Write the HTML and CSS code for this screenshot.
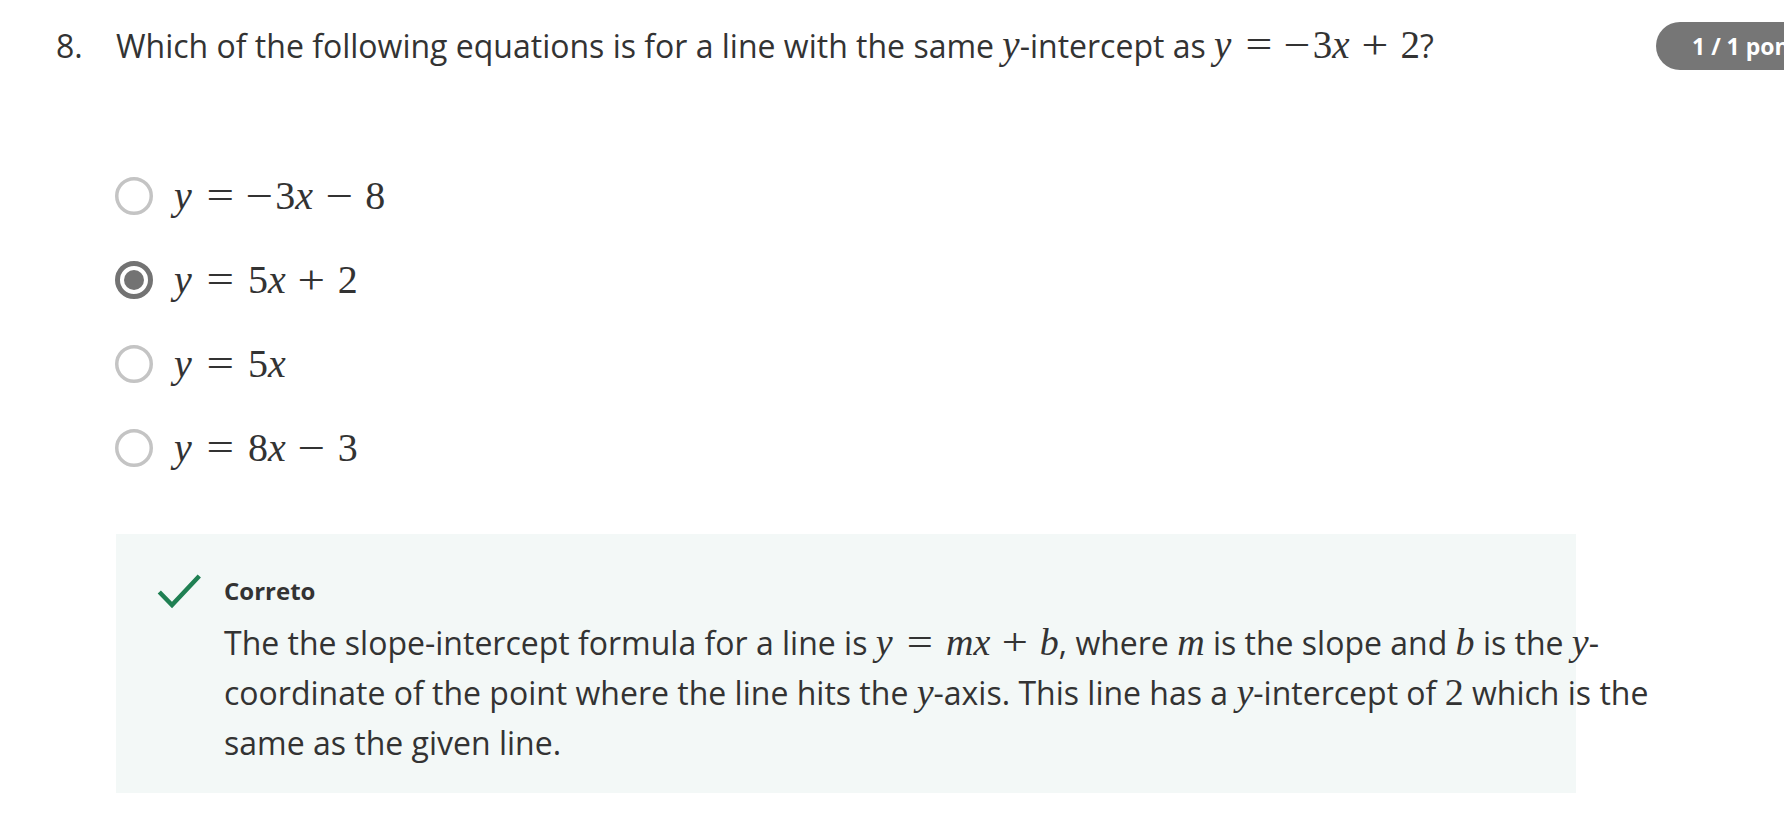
FILE: index.html
```html
<!DOCTYPE html>
<html lang="en">
<head>
<meta charset="utf-8">
<title>Question 8</title>
<link rel="stylesheet" href="styles.css">
</head>
<body>
<div class="page">
  <div class="qrow">
    <div class="qnum">8.</div>
    <div class="qtext">Which of the following equations is for a line with the same <span class="m"><span class="mi">y</span></span>-intercept as <span class="m"><span class="mi">y</span><span class="rel">=</span><span class="un">−</span>3<span class="mi">x</span><span class="bin">+</span>2</span>?</div>
    <div class="badge">1 / 1 ponto</div>
  </div>

  <ul class="options">
    <li class="opt">
      <svg class="radio" width="38" height="38" viewBox="0 0 38 38"><circle cx="19" cy="19" r="17.25" fill="none" stroke="#c4c4c4" stroke-width="3.5"/></svg>
      <span class="m opt-m"><span class="mi">y</span><span class="rel">=</span><span class="un">−</span>3<span class="mi">x</span><span class="bin">−</span>8</span>
    </li>
    <li class="opt">
      <svg class="radio" width="38" height="38" viewBox="0 0 38 38"><circle cx="19" cy="19" r="16.5" fill="none" stroke="#737373" stroke-width="5"/><circle cx="19" cy="19" r="10" fill="#737373"/></svg>
      <span class="m opt-m"><span class="mi">y</span><span class="rel">=</span>5<span class="mi">x</span><span class="bin">+</span>2</span>
    </li>
    <li class="opt">
      <svg class="radio" width="38" height="38" viewBox="0 0 38 38"><circle cx="19" cy="19" r="17.25" fill="none" stroke="#c4c4c4" stroke-width="3.5"/></svg>
      <span class="m opt-m"><span class="mi">y</span><span class="rel">=</span>5<span class="mi">x</span></span>
    </li>
    <li class="opt">
      <svg class="radio" width="38" height="38" viewBox="0 0 38 38"><circle cx="19" cy="19" r="17.25" fill="none" stroke="#c4c4c4" stroke-width="3.5"/></svg>
      <span class="m opt-m"><span class="mi">y</span><span class="rel">=</span>8<span class="mi">x</span><span class="bin">−</span>3</span>
    </li>
  </ul>

  <div class="feedback">
    <svg class="check" width="44" height="36" viewBox="0 0 44 36"><polyline points="2.3,19 15,32 42.3,3" fill="none" stroke="#1f8053" stroke-width="4.5"/></svg>
    <div class="fb-body">
      <div class="fb-title">Correto</div>
      <p class="fb-text">The the slope-intercept formula for a line is <span class="m"><span class="mi">y</span><span class="rel">=</span><span class="mi">mx</span><span class="bin">+</span><span class="mi">b</span></span>, where <span class="m"><span class="mi">m</span></span> is the slope and <span class="m"><span class="mi">b</span></span> is the <span class="m"><span class="mi">y</span></span>-coordinate of the point where the line hits the <span class="m"><span class="mi">y</span></span>-axis. This line has a <span class="m"><span class="mi">y</span></span>-intercept of <span class="m">2</span> which is the same as the given line.</p>
    </div>
  </div>
</div>
</body>
</html>
```

FILE: styles.css
```css
html, body {
  margin: 0;
  padding: 0;
  background: #ffffff;
  overflow: hidden;
}

body {
  font-family: "Open Sans", "Noto Sans", sans-serif;
  color: #333333;
}

.page {
  padding-left: 56px;
  width: 2000px;
}

.qrow {
  display: flex;
  align-items: flex-start;
  padding-top: 22px;
}

.qnum {
  width: 60px;
  flex-shrink: 0;
  font-size: 32px;
  line-height: 48px;
}

.qtext {
  width: 1540px;
  flex-shrink: 0;
  font-size: 32px;
  line-height: 48px;
}

.badge {
  flex-shrink: 0;
  margin-top: 0;
  height: 48px;
  display: flex;
  align-items: center;
  padding: 0 36px;
  border-radius: 24px;
  background: #767676;
  color: #ffffff;
  font-weight: 700;
  font-size: 23px;
  white-space: nowrap;
}

.m {
  font-family: "Liberation Serif", "Times New Roman", serif;
  font-size: 39px;
  line-height: 1;
  color: #333333;
  white-space: nowrap;
}

.mi {
  font-style: italic;
}

.rel,
.bin,
.un {
  display: inline-block;
  transform: scaleX(1.22);
}

.rel {
  margin: 0 0.42em;
}

.bin {
  margin: 0 0.37em;
}

.un {
  margin-right: 0.12em;
}

.options {
  list-style: none;
  margin: 84px 0 0 59px;
  padding: 0;
}

.opt {
  height: 84px;
  display: flex;
  align-items: center;
  gap: 21px;
}

.radio {
  display: block;
  flex-shrink: 0;
}

.opt-m {
  font-size: 40px;
  display: block;
  margin-top: 0;
}

.feedback {
  margin: 44px 0 0 60px;
  width: 1460px;
  box-sizing: border-box;
  background: #f3f8f7;
  display: flex;
  align-items: flex-start;
  padding: 40px 0 25px 41px;
}

.check {
  display: block;
  flex-shrink: 0;
  margin-top: -1px;
}

.fb-body {
  margin-left: 23px;
  width: 1470px;
  flex-shrink: 0;
}

.fb-title {
  font-weight: 700;
  font-size: 24px;
  line-height: 32px;
  margin-top: 1px;
}

.fb-text {
  margin: 11px 0 0 0;
  font-size: 32px;
  line-height: 50px;
}

.fb-text .m {
  font-size: 38px;
}
```
